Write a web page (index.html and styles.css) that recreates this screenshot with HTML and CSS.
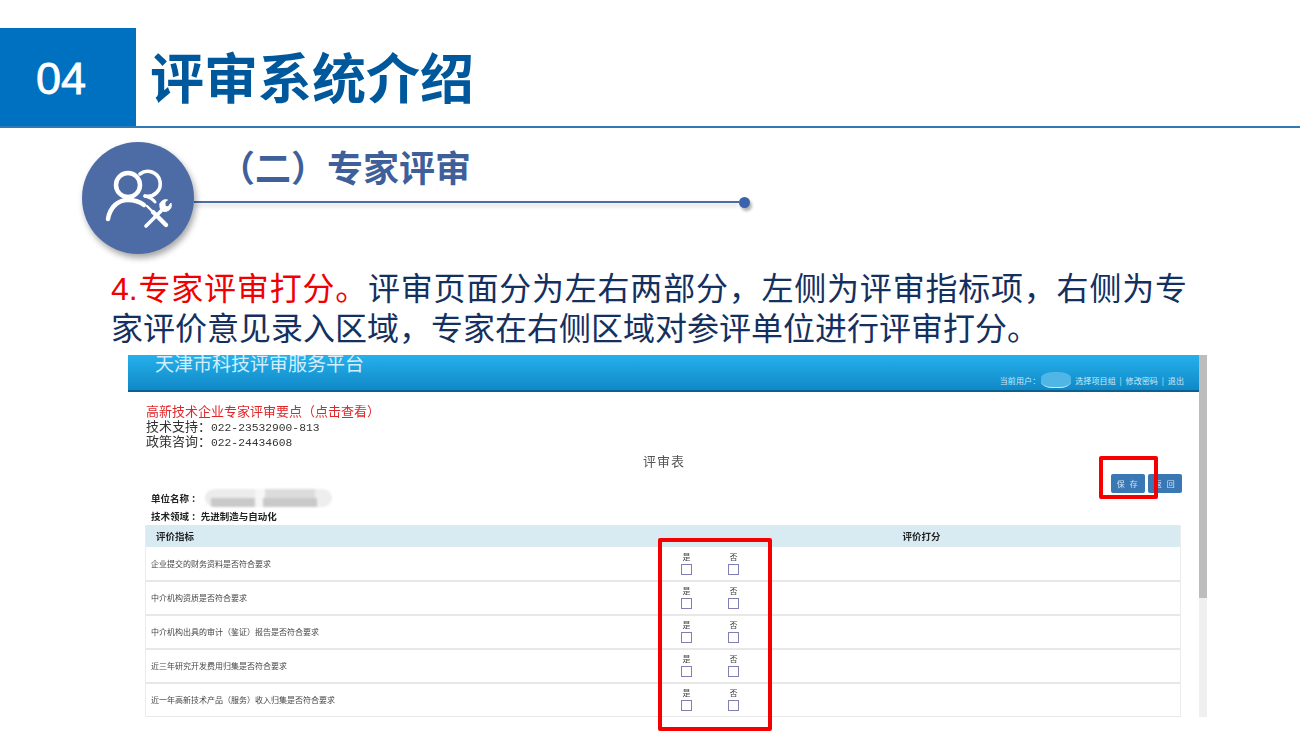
FILE: index.html
```html
<!DOCTYPE html>
<html lang="zh-CN">
<head>
<meta charset="utf-8">
<title>评审系统介绍</title>
<link rel="stylesheet" href="styles.css">
</head>
<body>
<main class="slide">
  <header class="top">
    <div class="badge">04</div>
    <h1 class="title">评审系统介绍</h1>
  </header>

  <section class="sub">
    <div class="disc">
      <svg class="disc-icon" viewBox="0 0 112 112" width="112" height="112" fill="none" stroke="#fff" stroke-linecap="round" aria-hidden="true">
        <circle cx="46" cy="43" r="12" stroke-width="4.500"/>
        <path d="M58 32 A12.500 12.500 0 1 1 63 54" stroke-width="3.600"/>
        <path d="M26 77 C28 65 36 58 46 58 C53 58 58 60 62 63" stroke-width="4.500"/>
        <path d="M63 54 C67 55 71 57 73 60" stroke-width="3"/>
        <path d="M64 84 L79 69" stroke-width="3.600"/>
        <path d="M78 62 C77 67 80 71 85 69 C88 68 90 66 89 61 L86 65 L83 64 L83 60 L85.500 58 C82 57 79 59 78 62 Z" fill="#fff" stroke-width="1"/>
        <path d="M65 64 L71 70" stroke-width="2.400"/>
        <path d="M71 70 L84 83" stroke-width="4.400"/>
      </svg>
    </div>
    <div class="sub-text">
      <h2 class="sub-title">（二）专家评审</h2>
      <div class="rule"><span class="rule-line"></span><span class="rule-dot"></span></div>
    </div>
  </section>

  <p class="lead"><span class="lead-red"><span class="lead-num">4.</span>专家评审打分。</span>评审页面分为左右两部分，左侧为评审指标项，右侧为专家评价意见录入区域，专家在右侧区域对参评单位进行评审打分。</p>

  <section class="shot">
    <div class="shot-main">
      <div class="bar">
        <div class="bar-title">天津市科技评审服务平台</div>
        <nav class="bar-nav">
          <span>当前用户：</span><span class="user-blob"></span><span>选择项目组&nbsp;&nbsp;|&nbsp;&nbsp;修改密码&nbsp;&nbsp;|&nbsp;&nbsp;退出</span>
        </nav>
      </div>
      <div class="info">
        <div class="info-red">高新技术企业专家评审要点（点击查看）</div>
        <div>技术支持：<span class="num">022-23532900-813</span></div>
        <div>政策咨询：<span class="num">022-24434608</span></div>
      </div>
      <div class="form-title">评审表</div>
      <div class="actions">
        <button class="btn">保 存</button>
        <button class="btn">返 回</button>
      </div>
      <div class="unit">
        <div class="unit-row"><b>单位名称 ：</b><span class="unit-blob"></span></div>
        <div class="unit-row"><b>技术领域 ：先进制造与自动化</b></div>
      </div>
      <div class="table">
        <div class="thead">
          <div class="th-left">评价指标</div>
          <div class="th-right">评价打分</div>
        </div>
        <div class="tr">
          <div class="td-left">企业提交的财务资料是否符合要求</div>
          <div class="choices">
            <div class="choice"><span>是</span><i class="box"></i></div>
            <div class="choice"><span>否</span><i class="box"></i></div>
          </div>
        </div>
        <div class="tr">
          <div class="td-left">中介机构资质是否符合要求</div>
          <div class="choices">
            <div class="choice"><span>是</span><i class="box"></i></div>
            <div class="choice"><span>否</span><i class="box"></i></div>
          </div>
        </div>
        <div class="tr">
          <div class="td-left">中介机构出具的审计（鉴证）报告是否符合要求</div>
          <div class="choices">
            <div class="choice"><span>是</span><i class="box"></i></div>
            <div class="choice"><span>否</span><i class="box"></i></div>
          </div>
        </div>
        <div class="tr">
          <div class="td-left">近三年研究开发费用归集是否符合要求</div>
          <div class="choices">
            <div class="choice"><span>是</span><i class="box"></i></div>
            <div class="choice"><span>否</span><i class="box"></i></div>
          </div>
        </div>
        <div class="tr">
          <div class="td-left">近一年高新技术产品（服务）收入归集是否符合要求</div>
          <div class="choices">
            <div class="choice"><span>是</span><i class="box"></i></div>
            <div class="choice"><span>否</span><i class="box"></i></div>
          </div>
        </div>
      </div>
    </div>
    <div class="scroll"><div class="scroll-thumb"></div></div>
  </section>

  <div class="mark mark-save"></div>
  <div class="mark mark-score"></div>
</main>
</body>
</html>
```
FILE: styles.css
```css
* { box-sizing: border-box; }
html, body { margin: 0; padding: 0; background: #fff; }
body { font-family: "Noto Sans CJK SC", "Liberation Sans", sans-serif; }

.slide { position: relative; width: 1300px; height: 731px; overflow: hidden; background: #fff; padding-top: 28px; }

.top { display: flex; height: 100px; border-bottom: 2px solid #2f7ab5; }
.badge { width: 136px; height: 98px; background: #0070c0; color: #fff; font: 400 45px/102px "Liberation Sans", sans-serif; -webkit-text-stroke: .8px #fff; padding-left: 36px; }
.title { margin: 0 0 0 14px; font-size: 54px; line-height: 95px; font-weight: 700; color: #00589c; white-space: nowrap; }

.sub { display: flex; height: 112px; margin: 14px 0 0 82px; }
.disc { width: 112px; height: 112px; border-radius: 50%; background: #4d6ca6; box-shadow: 2px 4px 6px rgba(0,0,0,.35); flex: none; position: relative; z-index: 1; }
.disc-icon { display: block; }
.sub-text { display: flex; flex-direction: column; }
.sub-title { margin: 0 0 0 25px; height: 54px; font-size: 36px; line-height: 48px; font-weight: 700; color: #3f5f9b; white-space: nowrap; }
.rule { display: flex; align-items: center; height: 12px; }
.rule-line { width: 545px; height: 2px; background: #4d6ca6; box-shadow: 0 3px 4px rgba(0,0,0,.2); }
.rule-dot { width: 11px; height: 11px; border-radius: 50%; background: #3a62ad; box-shadow: 2px 3px 3px rgba(0,0,0,.3); }

.lead { margin: 12px 0 0 111px; width: 1076px; height: 80px; font-size: 32px; line-height: 40px; color: #14305f; text-align: justify; text-justify: inter-character; }
.lead-red { color: #f00000; }
.lead-num { font-family: "Liberation Sans", sans-serif; line-height: 0; }

.shot { display: flex; width: 1079px; height: 362px; margin: 9px 0 0 128px; filter: blur(.45px); color: #333; }
.shot-main { width: 1071px; position: relative; overflow: hidden; }
.scroll { width: 8px; background: #efefef; }
.scroll-thumb { height: 243px; background: #bdbdbd; }

.bar { display: flex; justify-content: space-between; height: 37px; background: linear-gradient(#25b1ec, #1088c6); border-bottom: 2px solid #0c5f8e; overflow: hidden; }
.bar-title { margin: -4px 0 0 27px; font-size: 19px; line-height: 24px; color: #d4eefb; white-space: nowrap; }
.bar-nav { display: flex; align-items: center; height: 16px; margin: 17px 15px 0 0; font-size: 8px; letter-spacing: .1px; color: #cde9f7; white-space: pre; }
.user-blob { width: 30px; height: 16px; margin: 0 4px 0 1px; border-radius: 40%; background: #4fb6e6; border-bottom: 1px solid #cfeefc; filter: blur(.6px); }

.info { margin: 11px 0 0 18px; font-size: 13px; line-height: 15px; color: #333; }
.info-red { color: #e0262a; }
.num { font-family: "Liberation Mono", monospace; font-size: 11.300px; line-height: 0; }

.form-title { margin-top: 6px; margin-left: 515px; height: 14px; font-size: 13px; line-height: 14px; letter-spacing: 1px; color: #555; }
.actions { display: flex; justify-content: flex-end; gap: 3px; height: 19px; margin: 6px 17px 0 0; }
.btn { width: 34px; height: 19px; padding: 0; border: 0; border-radius: 2px; background: #3a78b5; color: #cfe2f2; font: 8px/19px "Noto Sans CJK SC", sans-serif; letter-spacing: 1.500px; }

.unit { margin: -4px 0 0 23px; height: 36px; font-size: 9.500px; line-height: 18px; color: #222; }
.unit-row { display: flex; align-items: center; height: 18px; white-space: nowrap; }
.unit-row b { font-weight: 700; }
.unit-blob { width: 127px; height: 18px; margin-left: 4px; border-radius: 9px; filter: blur(1.200px); background:
  linear-gradient(90deg, transparent 0 6px, #c9c9c9 6px 50px, transparent 50px 58px, #c9c9c9 58px 112px, transparent 112px) 0 100% / 100% 9px no-repeat,
  linear-gradient(90deg, #ececec 0 50px, #f6f6f6 50px 60px, #dcdcdc 60px 110px, #eee 110px);
}

.table { margin: 0 18px 0 17px; width: 1036px; border-left: 1px solid #ececec; border-right: 1px solid #ececec; }
.thead { display: grid; grid-template-columns: 1fr 1fr; height: 22px; margin-bottom: 1px; background: #d9ebf2; font-size: 9.500px; line-height: 22px; font-weight: 700; color: #222; }
.th-left { padding-left: 10px; }
.th-right { text-align: center; }
.tr { display: grid; grid-template-columns: 1fr 1fr; height: 34px; border-bottom: 2px solid #e8e8e8; font-size: 8px; color: #444; }
.td-left { padding-left: 5px; line-height: 32px; white-space: nowrap; }
.choices { display: flex; }
.choice { display: flex; flex-direction: column; align-items: center; width: 47px; padding-top: 3px; line-height: 11px; }
.box { display: block; width: 11px; height: 11px; border: 1.500px solid #7f7fb5; margin-top: 2px; }

.mark { position: absolute; border: 4px solid #f40000; border-radius: 2px; }
.mark-save { left: 1099px; top: 456px; width: 59px; height: 43px; }
.mark-score { left: 658px; top: 538px; width: 114px; height: 193px; }
```
